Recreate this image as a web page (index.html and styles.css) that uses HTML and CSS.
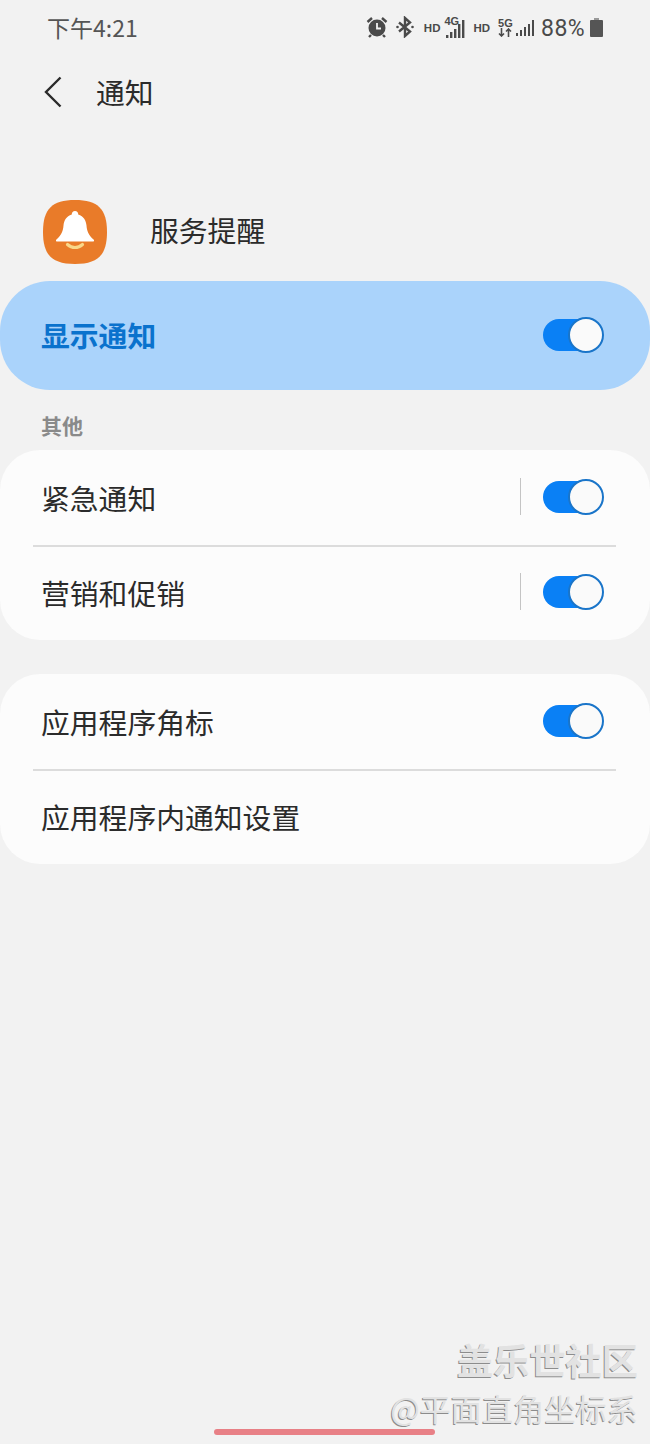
FILE: index.html
```html
<!DOCTYPE html>
<html lang="zh-CN">
<head>
	<meta charset="UTF-8">
	<title>通知</title>
	<link rel="stylesheet" href="styles.css">
</head>
<body>
	<header class="status">
		<span class="clock">下午4:21</span>
		<div class="status-icons">
			<svg class="ico-alarm" width="22" height="22" viewBox="0 0 22 22">
				<circle cx="11" cy="12" r="8.500" fill="#4a4a4a"/>
				<path d="M11 7v5.500h4" fill="none" stroke="#f2f2f2" stroke-width="1.800"/>
				<path d="M1.500 6 6 2M20.500 6 16 2M5 19l-2 2M17 19l2 2" fill="none" stroke="#4a4a4a" stroke-width="2.400"/>
			</svg>
			<svg class="ico-bt" width="18" height="22" viewBox="0 0 18 22">
				<path d="M3 6.500 14 15.500 9 20V2l5 4.500L3 15.500" fill="none" stroke="#4a4a4a" stroke-width="2.400"/>
				<circle cx="1.500" cy="11" r="1.300" fill="#4a4a4a"/>
				<circle cx="16.500" cy="11" r="1.300" fill="#4a4a4a"/>
			</svg>
			<span class="hd hd-first">HD</span>
			<div class="net net-4g">
				<span class="net-label">4G</span>
				<svg class="bars-tall" width="22" height="21" viewBox="0 0 22 21">
					<path d="M1 17h2.400v3H1zM5 14h2.400v6H5zM9 11h2.400v9H9zM13 6h2.400v14H13zM17 2h2.400v18H17z" fill="#4a4a4a"/>
				</svg>
			</div>
			<span class="hd hd-second">HD</span>
			<div class="net net-5g">
				<div class="net-stack">
					<span class="net-label">5G</span>
					<svg width="14" height="9" viewBox="0 0 14 9">
						<path d="M3.500 0v8M1 5.500 3.500 8 6 5.500M10.500 9V1M8 3.500 10.500 1 13 3.500" fill="none" stroke="#4a4a4a" stroke-width="1.600"/>
					</svg>
				</div>
				<svg class="bars-low" width="18" height="18" viewBox="0 0 18 18">
					<path d="M0 14h2v3H0zM4 11h2v6H4zM8 8h2v9H8zM12 5h2v12h-2zM16 1h2v16h-2z" fill="#4a4a4a"/>
				</svg>
			</div>
			<span class="battery-text">88%</span>
			<div class="battery"></div>
		</div>
	</header>

	<div class="topbar">
		<svg class="back" width="18" height="32" viewBox="0 0 18 32">
			<path d="M16.500 1.500 2 16l14.500 14.500" fill="none" stroke="#2b2b2b" stroke-width="2.400"/>
		</svg>
		<h1 class="title">通知</h1>
	</div>

	<div class="app-row">
		<svg class="app-icon" width="64" height="64" viewBox="0 0 64 64">
			<path d="M32 0C55 0 64 9 64 32S55 64 32 64 0 55 0 32 9 0 32 0z" fill="#e97b29"/>
			<path d="M32 11a3.200 3.200 0 0 1 3.200 3.600c5.500 1.800 7.800 6 8.300 11 .4 5.500 1.800 9.200 7.300 14.200a1.100 1.100 0 0 1-.9 1.800H14.100a1.100 1.100 0 0 1-.9-1.800c5.500-5 6.900-8.700 7.300-14.200.5-5 2.800-9.200 8.300-11A3.200 3.200 0 0 1 32 11z" fill="#fff"/>
			<path d="M24.500 44.500c4.500 4 10.500 4 15 0" fill="none" stroke="#f9d88a" stroke-width="3.200" stroke-linecap="round"/>
		</svg>
		<span class="app-name">服务提醒</span>
	</div>

	<main class="content">
		<section class="master">
			<span class="master-label">显示通知</span>
			<span class="toggle"></span>
		</section>

		<h2 class="section-title">其他</h2>

		<section class="card">
			<div class="row">
				<span class="row-label">紧急通知</span>
				<span class="row-sep"></span>
				<span class="toggle"></span>
			</div>
			<div class="row">
				<span class="row-label">营销和促销</span>
				<span class="row-sep"></span>
				<span class="toggle"></span>
			</div>
		</section>

		<section class="card">
			<div class="row">
				<span class="row-label">应用程序角标</span>
				<span class="toggle"></span>
			</div>
			<div class="row">
				<span class="row-label">应用程序内通知设置</span>
			</div>
		</section>
	</main>

	<footer class="home-bar"><span class="home-pill"></span></footer>

	<div class="watermark">
		<div class="wm-big">盖乐世社区</div>
		<div class="wm-small">@平面直角坐标系</div>
	</div>
</body>
</html>
```

FILE: styles.css
```css
html{
	box-sizing: border-box;
	font-family: "Noto Sans CJK SC", "Noto Sans", sans-serif;
}
*,
*:before,
*:after{
	box-sizing: inherit;
}

body{
	margin: 0;
	width: 650px;
	height: 1444px;
	position: relative;
	overflow: hidden;
	display: flex;
	flex-direction: column;
	background-color: #f2f2f2;
	color: #2b2b2b;
}

/* status bar */
.status{
	height: 56px;
	padding: 0 47px 1px 47px;
	display: flex;
	justify-content: space-between;
	align-items: center;
	color: #555;
}
.clock{
	font-size: 23px;
	line-height: 1;
}
.status-icons{
	display: flex;
	align-items: center;
	color: #4a4a4a;
}
.ico-alarm{
	position: relative;
	top: -1px;
}
.ico-bt{
	margin-left: 8px;
	position: relative;
	top: -1px;
}
.hd{
	font-family: "Liberation Sans", sans-serif;
	font-size: 11.500px;
	font-weight: 700;
}
.hd-first{
	margin-left: 10px;
}
.hd-second{
	margin-left: 7px;
}
.net{
	display: flex;
	position: relative;
}
.net-4g{
	width: 22px;
	height: 22px;
	margin-left: 4px;
}
.net-4g .net-label{
	position: absolute;
	top: -1px;
	left: 0;
}
.net-label{
	font-family: "Liberation Sans", sans-serif;
	font-size: 11px;
	font-weight: 700;
	line-height: 10px;
}
.bars-tall{
	position: absolute;
	top: 1px;
	left: 1px;
}
.net-5g{
	margin-left: 8px;
	align-items: flex-end;
}
.net-stack{
	display: flex;
	flex-direction: column;
	width: 15px;
}
.bars-low{
	margin-left: 3px;
}
.battery-text{
	margin-left: 7px;
	padding-top: 2px;
	font-family: "Roboto", sans-serif;
	font-size: 23px;
	line-height: 1;
	letter-spacing: .4px;
}
.battery{
	width: 13px;
	height: 17px;
	margin-top: 2px;
	margin-left: 5px;
	background: #555;
	border-radius: 1px;
	position: relative;
}
.battery:before{
	content: "";
	position: absolute;
	top: -2px;
	left: 4px;
	width: 5px;
	height: 2px;
	background: #9a9a9a;
}

/* top bar */
.topbar{
	height: 74px;
	padding: 0 0 2px 44px;
	display: flex;
	align-items: center;
}
.back{
	margin-right: 34px;
}
.title{
	margin: 0;
	font-size: 28.800px;
	font-weight: 400;
	line-height: 1;
}

/* app row */
.app-row{
	margin-top: 70px;
	padding-left: 43px;
	display: flex;
	align-items: center;
}
.app-icon{
	flex-shrink: 0;
}
.app-name{
	margin-left: 43px;
	font-size: 28.800px;
	line-height: 1;
	position: relative;
	top: -2px;
}

/* main list */
.content{
	flex-grow: 1;
	margin-top: 17px;
}
.master{
	height: 109px;
	padding: 0 46px 0 41px;
	border-radius: 50px;
	background-color: #aad3fb;
	display: flex;
	justify-content: space-between;
	align-items: center;
}
.master-label{
	font-size: 28.800px;
	font-weight: 700;
	line-height: 1;
	color: #0a72cd;
}
.section-title{
	margin: 0;
	height: 60px;
	padding: 23px 0 0 41px;
	font-size: 21px;
	font-weight: 700;
	line-height: 24px;
	color: #8a8a8a;
}
.card{
	margin-bottom: 34px;
	border-radius: 40px;
	background-color: #fcfcfc;
}
.row{
	height: 95px;
	padding: 0 46px 0 41px;
	display: flex;
	align-items: center;
	position: relative;
}
.row + .row:before{
	content: "";
	position: absolute;
	top: 0;
	left: 33px;
	right: 34px;
	height: 2px;
	background-color: #dcdcdc;
}
.row-label{
	flex-grow: 1;
	padding-top: 2px;
	font-size: 28.800px;
	line-height: 1;
}
.row-sep{
	width: 1px;
	height: 37px;
	margin-right: 22px;
	margin-bottom: 2px;
	background-color: #c4c4c4;
}

/* switch */
.toggle{
	width: 61px;
	height: 36px;
	margin-bottom: 2px;
	flex-shrink: 0;
	position: relative;
}
.toggle:before{
	content: "";
	position: absolute;
	top: 2px;
	left: 0;
	right: 4px;
	height: 32px;
	border-radius: 16px;
	background-color: #0a80f5;
}
.toggle:after{
	content: "";
	position: absolute;
	top: 0;
	right: 0;
	width: 36px;
	height: 36px;
	border: 2px solid #1a75c9;
	border-radius: 50%;
	background-color: #fafafa;
}

/* nav pill */
.home-bar{
	height: 38px;
	padding-bottom: 9px;
	display: flex;
	justify-content: center;
	align-items: flex-end;
}
.home-pill{
	width: 221px;
	height: 6px;
	margin-right: 1px;
	border-radius: 3px;
	background-color: #e88086;
}

/* watermark sits over the page */
.watermark{
	position: absolute;
	right: 12px;
	bottom: 17px;
	text-align: right;
	color: #e2e2e2;
	text-shadow: -1px 1px 0 #8c8c8c;
}
.wm-big{
	font-size: 36.200px;
	font-weight: 700;
	line-height: 50px;
	margin-bottom: 5px;
}
.wm-small{
	font-size: 31.200px;
	line-height: 38px;
}
```
